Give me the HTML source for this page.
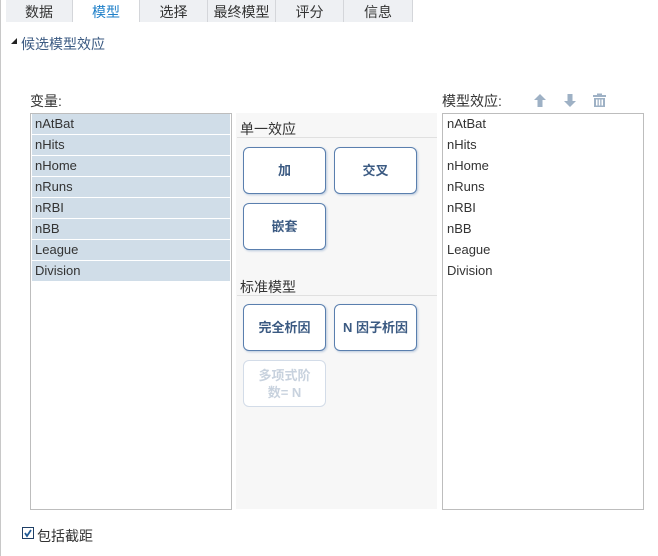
<!DOCTYPE html><html><head><meta charset="utf-8"><style>
*{margin:0;padding:0;box-sizing:border-box}
body{width:658px;height:556px;background:#fff;font-family:"Liberation Sans","Noto Sans CJK SC",sans-serif;position:relative;overflow:hidden;color:#333}
.a{position:absolute}
.tab{position:absolute;top:0;height:22px;background:#eef0f3;border-right:1px solid #d4d6da;font-size:14px;text-align:center;line-height:24px;color:#333}
.list{position:absolute;top:113px;width:202px;height:397px;border:1px solid #bdbdbd;background:#fff;padding:0 1px}
.it{height:21px;font-size:13px;line-height:20px;padding-left:3px;border-bottom:1px solid #fff;color:#333}
.sel .it{background:#d0dde8}
.btn{position:absolute;width:83px;height:47px;border:1px solid #5a7fae;border-radius:6px;background:#fff;box-shadow:1px 1px 2px #b8c8dc;font-size:13px;font-weight:bold;color:#3b5a82;text-align:center;display:flex;align-items:center;justify-content:center;line-height:17px}
.hd{position:absolute;left:240px;font-size:14px;color:#333}
.ln{position:absolute;left:237px;width:200px;height:1px;background:#e0e0e0}
</style></head><body>
<div class="a" style="left:0;top:0;width:1px;height:556px;background:#c8c8c8"></div>
<div class="tab" style="left:6px;width:67px">数据</div>
<div class="tab" style="left:73px;width:67px;background:#fff;color:#1e7fc8">模型</div>
<div class="tab" style="left:140px;width:68px">选择</div>
<div class="tab" style="left:208px;width:68px">最终模型</div>
<div class="tab" style="left:276px;width:68px">评分</div>
<div class="tab" style="left:344px;width:69px">信息</div>
<div class="a" style="left:11px;top:38px;width:0;height:0;border-left:6px solid transparent;border-bottom:6px solid #222"></div>
<div class="a" style="left:21px;top:34px;font-size:14px;color:#3b5a82">候选模型效应</div>
<div class="a" style="left:30px;top:91px;font-size:14px">变量:</div>
<div class="a" style="left:442px;top:91px;font-size:14px">模型效应:</div>
<svg class="a" style="left:533px;top:93px" width="80" height="15"><path d="M7 1 L13 7 H9.5 V14 H4.5 V7 H1 Z" fill="#9eb1c5"/><path d="M34.5 1 H39.5 V8 H43 L37 14 L31 8 H34.5 Z" fill="#9eb1c5"/><rect x="60" y="2" width="13" height="2" fill="#9eb1c5"/><rect x="64" y="0.5" width="5" height="2" fill="#9eb1c5"/><path d="M61 5 H72 V14 H61 Z M63 6.5 V12.5 H64.5 V6.5 Z M65.8 6.5 V12.5 H67.2 V6.5 Z M68.5 6.5 V12.5 H70 V6.5 Z" fill="#9eb1c5" fill-rule="evenodd"/></svg>
<div class="list sel" style="left:30px"><div class="it">nAtBat</div><div class="it">nHits</div><div class="it">nHome</div><div class="it">nRuns</div><div class="it">nRBI</div><div class="it">nBB</div><div class="it">League</div><div class="it">Division</div></div>
<div class="a" style="left:236px;top:113px;width:201px;height:396px;background:#f7f7f7"></div>
<div class="hd" style="top:119px">单一效应</div>
<div class="ln" style="top:137px"></div>
<div class="btn" style="left:243px;top:147px">加</div>
<div class="btn" style="left:334px;top:147px">交叉</div>
<div class="btn" style="left:243px;top:203px">嵌套</div>
<div class="hd" style="top:277px">标准模型</div>
<div class="ln" style="top:295px"></div>
<div class="btn" style="left:243px;top:304px">完全析因</div>
<div class="btn" style="left:334px;top:304px">N 因子析因</div>
<div class="btn" style="left:243px;top:360px;border-color:#d3dce8;color:#c8d2de;box-shadow:none">多项式阶<br>数= N</div>
<div class="list" style="left:442px"><div class="it">nAtBat</div><div class="it">nHits</div><div class="it">nHome</div><div class="it">nRuns</div><div class="it">nRBI</div><div class="it">nBB</div><div class="it">League</div><div class="it">Division</div></div>
<div class="a" style="left:22px;top:527px;width:12px;height:12px;border:1px solid #1f3f66;background:#fff"></div>
<svg class="a" style="left:23px;top:528px" width="10" height="10"><path d="M2 5 L4 8 L8 2" stroke="#1f5a96" stroke-width="1.8" fill="none"/></svg>
<div class="a" style="left:37px;top:526px;font-size:14px">包括截距</div>
</body></html>
